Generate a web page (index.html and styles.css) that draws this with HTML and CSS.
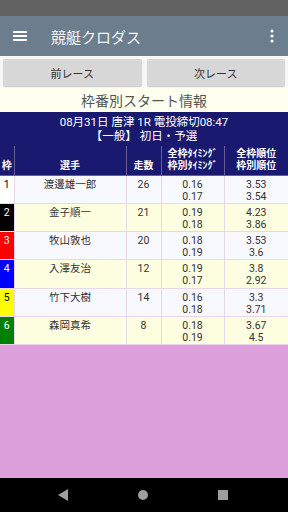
FILE: index.html
```html
<!DOCTYPE html>
<html lang="ja">
<head>
<meta charset="utf-8">
<link rel="stylesheet" href="styles.css">
</head>
<body>
<div class="screen">
  <div class="status"></div>
  <header class="appbar">
    <svg class="menu" width="14" height="12" viewBox="0 0 14 12"><rect x="0" y="1" width="14" height="2" fill="#fff"/><rect x="0" y="5" width="14" height="2" fill="#fff"/><rect x="0" y="9" width="14" height="2" fill="#fff"/></svg>
    <span class="apptitle">競艇クロダス</span>
    <svg class="kebab" width="4" height="14" viewBox="0 0 4 14"><circle cx="2" cy="2" r="1.6" fill="#fff"/><circle cx="2" cy="7" r="1.6" fill="#fff"/><circle cx="2" cy="12" r="1.6" fill="#fff"/></svg>
  </header>
  <div class="btns">
    <div class="btn">前レース</div>
    <div class="btn">次レース</div>
  </div>
  <div class="pagetitle">枠番別スタート情報</div>
  <div class="info">
    <div>08月31日 唐津 1R 電投締切08:47</div>
    <div>【一般】 初日・予選</div>
  </div>
  <table class="grid">
    <colgroup><col class="c1"><col class="c2"><col class="c3"><col class="c4"><col class="c5"></colgroup>
    <thead>
      <tr><th>枠</th><th>選手</th><th>走数</th><th>全枠ﾀｲﾐﾝｸﾞ<br>枠別ﾀｲﾐﾝｸﾞ</th><th>全枠順位<br>枠別順位</th></tr>
    </thead>
    <tbody>
      <tr class="odd"><td class="w1">1</td><td>渡邊雄一郎</td><td>26</td><td>0.16<br>0.17</td><td>3.53<br>3.54</td></tr>
      <tr class="even"><td class="w2">2</td><td>金子順一</td><td>21</td><td>0.19<br>0.18</td><td>4.23<br>3.86</td></tr>
      <tr class="odd"><td class="w3">3</td><td>牧山敦也</td><td>20</td><td>0.18<br>0.19</td><td>3.53<br>3.6</td></tr>
      <tr class="even"><td class="w4">4</td><td>入澤友治</td><td>12</td><td>0.19<br>0.17</td><td>3.8<br>2.92</td></tr>
      <tr class="odd"><td class="w5">5</td><td>竹下大樹</td><td>14</td><td>0.16<br>0.18</td><td>3.3<br>3.71</td></tr>
      <tr class="even"><td class="w6">6</td><td>森岡真希</td><td>8</td><td>0.18<br>0.19</td><td>3.67<br>4.5</td></tr>
    </tbody>
  </table>
  <div class="fill"></div>
  <nav class="navbar">
    <svg width="12" height="12" viewBox="0 0 12 12"><polygon points="11,0 11,12 1,6" fill="#9e9e9e"/></svg>
    <svg width="12" height="12" viewBox="0 0 12 12"><circle cx="6" cy="6" r="5" fill="#9e9e9e"/></svg>
    <svg width="12" height="12" viewBox="0 0 12 12"><rect x="1" y="1" width="10" height="10" fill="#9e9e9e"/></svg>
  </nav>
</div>
</body>
</html>
```

FILE: styles.css
```css
* { box-sizing: border-box; }
html, body { margin: 0; padding: 0; }
body {
  width: 288px;
  height: 512px;
  overflow: hidden;
  font-family: "Noto Sans CJK JP", "Noto Sans", sans-serif;
}
.screen {
  display: flex;
  flex-direction: column;
  height: 512px;
}
.status {
  height: 16px;
  background: #626262;
  flex: none;
}
.appbar {
  height: 40px;
  flex: none;
  background: #6c7d8e;
  display: flex;
  align-items: center;
  padding: 0 14px 0 13px;
  color: #fff;
}
.menu { flex: none; }
.apptitle {
  margin-left: 24px;
  font-size: 15px;
  flex: 1;
  color: #f4f6f8;
}
.kebab { flex: none; }
.btns {
  flex: none;
  display: flex;
  gap: 5px;
  padding: 3px 3px 2px;
  background: #f7f7f7;
}
.btn {
  flex: 1;
  height: 27px;
  background: #d7d7d7;
  border-radius: 2px;
  box-shadow: 0 1px 1px rgba(0,0,0,0.18);
  display: flex;
  align-items: center;
  justify-content: center;
  font-size: 11px;
  color: #333;
}
.pagetitle {
  flex: none;
  height: 24px;
  background: #fffff0;
  text-align: center;
  font-size: 14px;
  line-height: 24px;
  color: #555;
}
.info {
  flex: none;
  height: 34px;
  background: #191970;
  color: #fff;
  text-align: center;
  font-family: Roboto, "Noto Sans CJK JP", sans-serif;
  font-size: 11.5px;
  line-height: 14px;
  padding-top: 3px;
}
.grid {
  flex: none;
  width: 288px;
  border-collapse: collapse;
  table-layout: fixed;
  font-family: Roboto, "Noto Sans CJK JP", sans-serif;
  font-size: 10.5px;
  color: #333;
}
.c1 { width: 14px; }
.c2 { width: 112px; }
.c3 { width: 35px; }
.c4 { width: 63px; }
.c5 { width: 64px; }
.grid th {
  background: #191970;
  color: #fff;
  font-weight: bold;
  font-size: 10px;
  line-height: 12.5px;
  height: 29px;
  border: 1px solid #6a5a9a;
  border-top: none;
  vertical-align: bottom;
  padding: 0 0 2px;
}
.grid th:first-child { border-left: none; }
.grid th:last-child { border-right: none; }
.grid td {
  height: 28.3px;
  padding: 3px 0 0;
  text-align: center;
  vertical-align: top;
  line-height: 12px;
  border: 1px solid #ead6ea;
}
.grid td:first-child { border-left: none; }
.grid td:last-child { border-right: none; }
.odd td { background: #f8f8ff; }
.even td { background: #fefee0; }
.grid td.w1 { background: #fff; color: #000; }
.grid td.w2 { background: #000; color: #fff; }
.grid td.w3 { background: #ff0000; color: #fff; }
.grid td.w4 { background: #0000ff; color: #fff; }
.grid td.w5 { background: #ffff00; color: #000; }
.grid td.w6 { background: #008000; color: #fff; }
.fill {
  flex: 1;
  background: #dda0dd;
}
.navbar {
  flex: none;
  height: 34px;
  background: #000;
  display: flex;
  align-items: center;
  justify-content: space-between;
  padding: 0 59px 0 57px;
}
```
